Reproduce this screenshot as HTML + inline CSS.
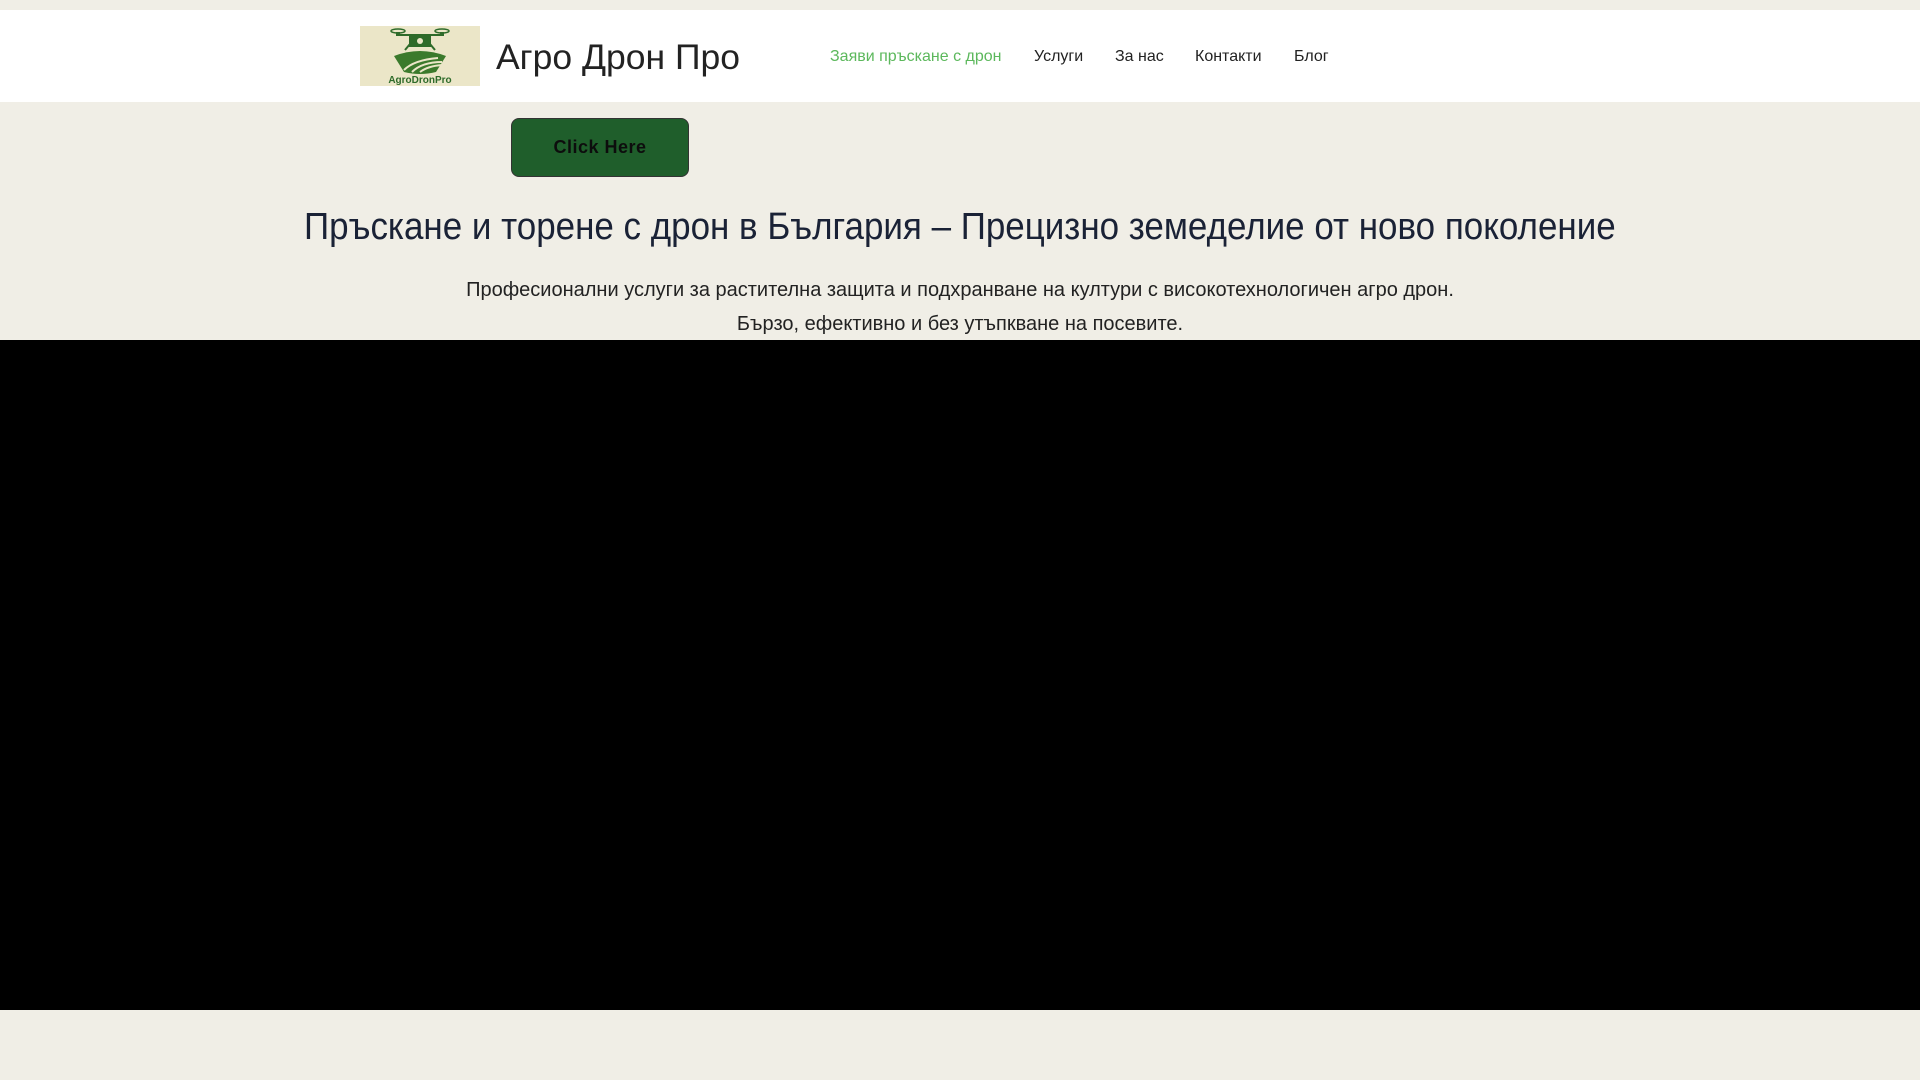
<!DOCTYPE html>
<html><head><meta charset="utf-8"><style>
*{margin:0;padding:0;box-sizing:border-box}
body{width:1920px;height:1080px;background:#f0eee6;font-family:"Liberation Sans",sans-serif;position:relative;overflow:hidden}
.hdr{position:absolute;left:0;top:10px;width:1920px;height:92px;background:#fff}
.logo{position:absolute;left:360px;top:16px;width:120px;height:60px;background:#ebe6c8}
.title{position:absolute;left:496px;top:27px;font-size:35.5px;color:#222;white-space:nowrap}
.nav{position:absolute;top:38px;font-size:16px;color:#222;white-space:nowrap;display:inline-block}
.btn{position:absolute;left:511px;top:118px;width:178px;height:59px;background:#1f5e2b;border:1px solid #333;border-radius:8px;font-weight:bold;font-size:18px;color:#0d0d0d;text-align:center;line-height:57px;letter-spacing:.5px}
.h1{position:absolute;left:0;width:1920px;top:206px;text-align:center;font-size:38px;color:#1a2236;white-space:nowrap}
.h1 span{display:inline-block;transform:scaleX(.92)}
.p{position:absolute;left:0;width:1920px;text-align:center;font-size:20px;color:#222;white-space:nowrap}
.vid{position:absolute;left:0;top:340px;width:1920px;height:670px;background:#000}
</style></head><body>
<div class="hdr">
<div class="logo"><svg width="120" height="60" viewBox="0 0 120 60">
<g fill="none" stroke="#2e6b2a" stroke-width="1.5"><ellipse cx="38" cy="5" rx="7" ry="2"/><ellipse cx="82" cy="5" rx="7" ry="2"/></g>
<rect x="36" y="6" width="4" height="4" fill="#2e6b2a"/><rect x="80" y="6" width="4" height="4" fill="#2e6b2a"/>
<path d="M38 9h44M50 10h20v10H50z" fill="#2e6b2a" stroke="#2e6b2a" stroke-width="2"/>
<path d="M50 18l-5 6M70 18l5 6" stroke="#2e6b2a" stroke-width="2"/>
<circle cx="60" cy="15" r="3" fill="#ebe6c8"/>
<path d="M34 30q26-10 52 0l-10 16q-16 4-32 0z" fill="#3b7a2c"/>
<path d="M44 44q10-10 34-12M52 46q10-10 30-10M60 46q8-6 22-7" stroke="#ebe6c8" stroke-width="2" fill="none"/>
<text x="60" y="57" text-anchor="middle" font-family="Liberation Sans" font-weight="bold" font-size="10" fill="#2e6b2a">AgroDronPro</text>
</svg></div>
<div class="title">Агро Дрон Про</div>
<span class="nav" style="left:830px;color:#5cb85c">Заяви пръскане с дрон</span>
<span class="nav" style="left:1034px">Услуги</span>
<span class="nav" style="left:1115px">За нас</span>
<span class="nav" style="left:1195px">Контакти</span>
<span class="nav" style="left:1294px">Блог</span>
</div>
<div class="btn">Click Here</div>
<div class="h1"><span>Пръскане и торене с дрон в България – Прецизно земеделие от ново поколение</span></div>
<div class="p" style="top:279px">Професионални услуги за растителна защита и подхранване на култури с високотехнологичен агро дрон.</div>
<div class="p" style="top:313px">Бързо, ефективно и без утъпкване на посевите.</div>
<div class="vid"></div>
</body></html>
